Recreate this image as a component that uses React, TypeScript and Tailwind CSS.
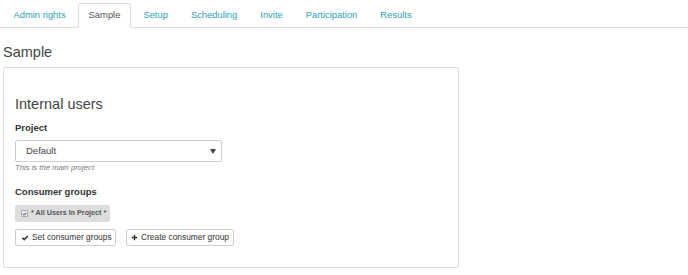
import React from "react";

const tabs = ["Admin rights", "Sample", "Setup", "Scheduling", "Invite", "Participation", "Results"];

function CheckIcon({ className }: { className?: string }) {
  return (
    <svg viewBox="0 0 16 16" className={className} fill="currentColor">
      <path d="M1.5 8.6 L3.6 6.5 L6.4 9.2 L12.4 3.2 L14.5 5.3 L6.4 13.4 Z" />
    </svg>
  );
}

function PlusIcon({ className }: { className?: string }) {
  return (
    <svg viewBox="0 0 16 16" className={className} fill="currentColor">
      <path d="M6.3 1.5 H9.7 V6.3 H14.5 V9.7 H9.7 V14.5 H6.3 V9.7 H1.5 V6.3 H6.3 Z" />
    </svg>
  );
}

export default function App() {
  return (
    <div className="w-[688px] h-[275px] bg-white overflow-hidden font-['Liberation_Sans',Arial,sans-serif]">
      <nav className="flex items-start h-[28px] border-b border-[#dddddd] pl-[3px]">
        {tabs.map((t) => {
          const active = t === "Sample";
          return (
            <div
              key={t}
              className={
                active
                  ? "mt-[3px] mr-[2px] h-[25px] flex items-center px-[9.5px] border border-[#dddddd] border-b-white bg-white rounded-t-[3px] text-[9.4px] text-[#555555] whitespace-nowrap"
                  : "mt-[3px] mr-[2px] h-[25px] flex items-center px-[9.5px] border border-transparent text-[9.4px] text-[#2fa2b0] whitespace-nowrap"
              }
            >
              {t}
            </div>
          );
        })}
      </nav>

      <h2 className="mt-[16px] ml-[3px] text-[14.5px] leading-[17px] text-[#444444]">Sample</h2>

      <div className="mt-[6px] ml-[3px] w-[456px] h-[201px] border border-[#dddddd] rounded-[2px] pl-[11px] pt-[28px]">
        <h3 className="text-[14.5px] leading-[17px] text-[#444444]">Internal users</h3>

        <div className="mt-[9px] text-[9.5px] leading-[12px] font-bold text-[#333333]">Project</div>

        <div className="mt-[6px] w-[207px] h-[22px] border border-[#cccccc] rounded-[2px] flex items-center justify-between pl-[10px] pr-[5px] text-[9.5px] text-[#444444]">
          <span>Default</span>
          <svg viewBox="0 0 6 5" className="w-[6px] h-[5px] text-[#444444]" fill="currentColor">
            <path d="M0 0 H6 L3 5 Z" />
          </svg>
        </div>

        <div className="mt-[1px] text-[7.7px] leading-[10px] italic text-[#777777]">This is the main project</div>

        <div className="mt-[13px] text-[9.5px] leading-[12px] font-bold text-[#333333]">Consumer groups</div>

        <div className="mt-[7px] w-[95px] h-[17px] bg-[#dddddd] rounded-[2px] flex items-center pl-[6px] gap-[3px]">
          <span className="w-[7px] h-[7px] border border-[#aaaaaa] bg-[#f2f2f2] rounded-[1px] flex items-center justify-center">
            <CheckIcon className="w-[6px] h-[6px] text-[#555555]" />
          </span>
          <span className="text-[7.2px] font-bold text-[#555555] whitespace-nowrap">* All Users In Project *</span>
        </div>

        <div className="mt-[7px] flex gap-[10px]">
          <div className="h-[17px] w-[101px] border border-[#cccccc] rounded-[2px] flex items-center pl-[5px] gap-[3px] text-[8.4px] text-[#333333] whitespace-nowrap">
            <CheckIcon className="w-[8px] h-[8px]" />
            <span>Set consumer groups</span>
          </div>
          <div className="h-[17px] w-[108px] border border-[#cccccc] rounded-[2px] flex items-center pl-[4px] gap-[3px] text-[8.4px] text-[#333333] whitespace-nowrap">
            <PlusIcon className="w-[7px] h-[7px]" />
            <span>Create consumer group</span>
          </div>
        </div>
      </div>
    </div>
  );
}
